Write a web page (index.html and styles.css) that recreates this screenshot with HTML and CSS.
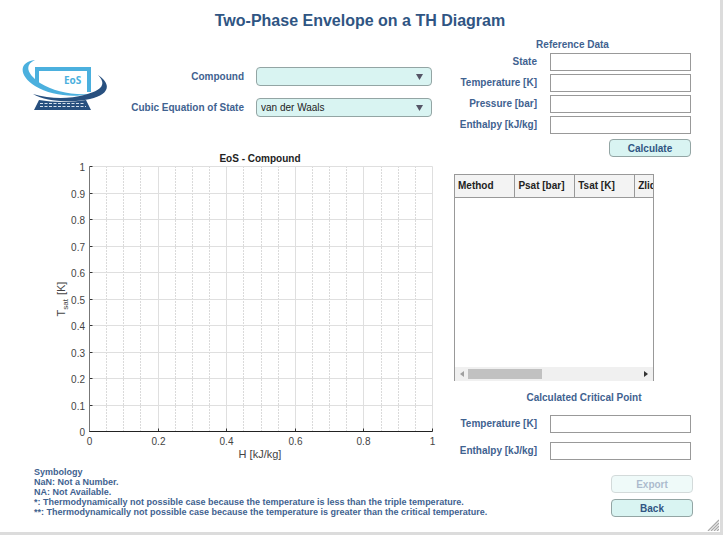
FILE: index.html
```html
<!DOCTYPE html>
<html lang="en">
<head>
<meta charset="utf-8">
<title>Two-Phase Envelope on a TH Diagram</title>
<link rel="stylesheet" href="styles.css">
</head>
<body>
<main class="window">
  <h1 class="title">Two-Phase Envelope on a TH Diagram</h1>
  <div class="content">
    <section class="left">
      <div class="setup">
        <svg class="logo" viewBox="0 0 88 56" role="img" aria-label="EoS">
          <path d="M15 30V13H67V36" fill="none" stroke="#4bb0de" stroke-width="4"/>
          <path d="M17 44L12 54H69L64 44Q40 48 17 44Z" fill="#28507f"/>
          <path d="M18 47.5H62M18 50.5H64" stroke="#d5e0ec" stroke-width="1.2" stroke-dasharray="3 1.5"/>
          <path d="M13 4C-4 6-3 20 13 30C28 39 50 42 67 38C48 39 31 35 18 27C5 18 2 9 13 4Z" fill="#4bb0de"/>
          <path d="M76 19C91 29 86 39 68 43C49 47 24 46 11 38C28 43 47 43 62 39C80 35 85 28 76 19Z" fill="#28507f"/>
          <text class="logo-text" x="42" y="28">EoS</text>
        </svg>
        <div class="choices">
          <label class="caption" for="compound">Compound</label>
          <select class="dropdown" id="compound"><option></option></select>
          <label class="caption" for="equation">Cubic Equation of State</label>
          <select class="dropdown" id="equation"><option>van der Waals</option></select>
        </div>
      </div>
      <svg class="chart" id="chart" viewBox="0 0 386 314" role="img" aria-label="EoS - Compound"></svg>
      <div class="notes">
        <p>Symbology</p>
        <p>NaN: Not a Number.</p>
        <p>NA: Not Available.</p>
        <p>*: Thermodynamically not possible case because the temperature is less than the triple temperature.</p>
        <p>**: Thermodynamically not possible case because the temperature is greater than the critical temperature.</p>
      </div>
    </section>
    <section class="right">
      <h2 class="caption heading">Reference Data</h2>
      <div class="fields">
        <label class="caption" for="state">State</label><input class="box" id="state">
        <label class="caption" for="temp">Temperature [K]</label><input class="box" id="temp">
        <label class="caption" for="pressure">Pressure [bar]</label><input class="box" id="pressure">
        <label class="caption" for="enthalpy">Enthalpy [kJ/kg]</label><input class="box" id="enthalpy">
      </div>
      <button class="button calculate" type="button">Calculate</button>
      <div class="results">
        <table>
          <thead><tr><th>Method</th><th>Psat [bar]</th><th>Tsat [K]</th><th>Zliq</th></tr></thead>
        </table>
        <div class="scrollbar">
          <svg viewBox="0 0 4 6"><path d="M4 0V6L0 3Z" fill="#a0a0a0"/></svg>
          <span class="track"><span class="thumb"></span></span>
          <svg viewBox="0 0 4 6"><path d="M0 0V6L4 3Z" fill="#333"/></svg>
        </div>
      </div>
      <h2 class="caption heading critical">Calculated Critical Point</h2>
      <div class="fields spaced">
        <label class="caption" for="ctemp">Temperature [K]</label><input class="box" id="ctemp">
        <label class="caption" for="centhalpy">Enthalpy [kJ/kg]</label><input class="box" id="centhalpy">
      </div>
      <div class="actions">
        <button class="button" type="button" disabled>Export</button>
        <button class="button" type="button">Back</button>
      </div>
    </section>
  </div>
  <svg class="grip" viewBox="0 0 12 12"><path d="M1 12L12 1M4 12L12 4M7 12L12 7M10 12L12 10" stroke="#aaa" stroke-width="1.3"/></svg>
</main>
<script src="chart.js"></script>
</body>
</html>
```
FILE: styles.css
```css
* { box-sizing: border-box; }
body {
  margin: 0;
  font-family: "Liberation Sans", Arial, sans-serif;
  font-size: 10px;
  color: #222;
}
.window {
  position: relative;
  min-height: 100vh;
  padding-top: 11px;
  border-right: 3px solid #dcdcdc;
  border-bottom: 3px solid #dcdcdc;
  background: #fff;
}
.title {
  margin: 0;
  font-size: 16px;
  line-height: 20px;
  text-align: center;
  color: #2f5583;
}
.content {
  display: grid;
  grid-template-columns: minmax(0, 1fr) 237px;
  column-gap: 12px;
  padding: 8px 29px 0 22px;
}
.left, .right { display: flex; flex-direction: column; }
.setup {
  display: flex;
  justify-content: space-between;
  padding: 17px 10px 0 0;
}
.logo { width: 88px; height: 56px; }
.logo-text {
  font: bold 10px "Open Sans", sans-serif;
  fill: #4bb0de;
}
.choices {
  display: grid;
  grid-template-columns: auto 176px;
  grid-auto-rows: 19px;
  gap: 12px;
  align-items: center;
  padding-top: 11px;
}
.caption {
  margin: 0;
  font-size: 10px;
  font-weight: bold;
  line-height: 12px;
  text-align: right;
  color: #3f6290;
}
.dropdown {
  appearance: none;
  width: 100%;
  height: 19px;
  padding: 0 4px;
  border: 1px solid #93a5a4;
  border-radius: 4px;
  font: 10px "Liberation Sans", Arial, sans-serif;
  color: #222;
  background: #d9f4f2 url("data:image/svg+xml,%3Csvg xmlns='http://www.w3.org/2000/svg' viewBox='0 0 7 6'%3E%3Cpath d='M0 0H7L3.5 6Z' fill='%23556'/%3E%3C/svg%3E") no-repeat right 8px center / 7px 6px;
}
.chart {
  width: calc(100% - 34px);
  margin: 34px 8px 0 26px;
  overflow: visible;
  font-size: 10px;
  fill: #444;
}
.chart-title { font-weight: bold; font-size: 10px; fill: #222; }
.axis-label { font-size: 11px; }
.sub { font-size: 8px; }
.notes {
  padding: 2px 0 0 12px;
  font-size: 9px;
  font-weight: bold;
  line-height: 10px;
  color: #3f6290;
  white-space: nowrap;
}
.notes p { margin: 0; }
.heading { text-align: center; }
.fields {
  display: grid;
  grid-template-columns: 1fr 141px;
  gap: 3px 13px;
  align-items: center;
  margin-top: 2px;
}
.spaced { row-gap: 9px; margin-top: 11px; }
.box {
  width: 100%;
  height: 18px;
  border: 1px solid #999;
  background: #fff;
}
.button {
  width: 82px;
  height: 18px;
  padding: 0;
  border: 1px solid #93a5a4;
  border-radius: 4px;
  font: bold 10px "Liberation Sans", Arial, sans-serif;
  color: #2f5583;
  background: #d9f4f2;
}
.button:disabled { opacity: 0.4; }
.calculate { align-self: flex-end; margin-top: 5px; }
.results {
  display: flex;
  flex-direction: column;
  width: 200px;
  height: 207px;
  margin-top: 17px;
  overflow: hidden;
  border: solid #999;
  border-width: 1px 1px 0;
}
.results table {
  width: 240px;
  table-layout: fixed;
  border-collapse: collapse;
}
.results th {
  height: 22px;
  padding: 0 3px;
  border: solid #999;
  border-width: 0 1px 1px 0;
  font-weight: bold;
  text-align: left;
  background: #f3f3f3;
}
.scrollbar {
  display: flex;
  align-items: center;
  gap: 4px;
  height: 14px;
  margin-top: auto;
  padding: 0 5px;
  background: #f0f0f0;
}
.scrollbar svg { width: 4px; height: 6px; }
.track { flex: 1; }
.thumb { display: block; width: 43%; height: 10px; background: #c1c1c1; }
.critical { margin-top: 11px; padding-left: 23px; }
.actions {
  display: flex;
  flex-direction: column;
  align-items: flex-end;
  gap: 6px;
  margin: 15px -2px 0 0;
}
.grip {
  position: absolute;
  right: 1px;
  bottom: 1px;
  width: 12px;
  height: 12px;
}
```
FILE: chart.js
```js
const chart = document.getElementById("chart");
const left = 41, right = 384, upper = 15, lower = 280;
const xAt = v => Math.round(left + (right - left) * v) + 0.5;
const yAt = v => Math.round(lower - (lower - upper) * v) + 0.5;
const line = (x1, y1, x2, y2, stroke, dash) =>
  `<line x1="${x1}" y1="${y1}" x2="${x2}" y2="${y2}" stroke="${stroke}"${dash ? ` stroke-dasharray="${dash}"` : ""}/>`;
const parts = [];

for (let i = 1; i <= 20; i++) {
  const x = xAt(i / 20);
  const major = i % 4 === 0;
  parts.push(line(x, yAt(1), x, yAt(0), major ? "#dfdfdf" : "#b4b4b4", major ? "" : "1 2"));
}
for (let i = 0; i <= 10; i++) {
  const y = yAt(i / 10);
  if (i) parts.push(line(xAt(0), y, xAt(1), y, "#dfdfdf"));
  parts.push(line(xAt(0), y, xAt(0) + 3, y, "#333"));
  parts.push(`<text x="${left - 4}" y="${y + 4}" text-anchor="end">${i / 10}</text>`);
}
for (let i = 0; i <= 5; i++) {
  const x = xAt(i / 5);
  parts.push(line(x, yAt(0), x, yAt(0) - 3, "#333"));
  parts.push(`<text x="${x}" y="${lower + 14}" text-anchor="middle">${i / 5}</text>`);
}
parts.push(line(xAt(0), yAt(1), xAt(0), yAt(0), "#777"));
parts.push(line(xAt(0), yAt(0), xAt(1), yAt(0), "#222"));
parts.push(`<text class="chart-title" x="212" y="11" text-anchor="middle">EoS - Compound</text>`);
parts.push(`<text class="axis-label" x="212" y="307" text-anchor="middle">H [kJ/kg]</text>`);
parts.push(`<text class="axis-label" transform="translate(17 148) rotate(-90)" text-anchor="middle">T<tspan class="sub" dy="3">sat</tspan><tspan dy="-3" dx="4">[K]</tspan></text>`);
chart.innerHTML = parts.join("");
```
